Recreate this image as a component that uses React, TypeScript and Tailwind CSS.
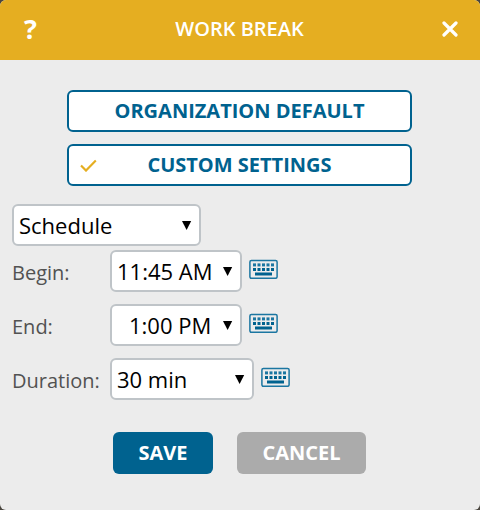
import React from "react";

function Keyboard() {
  const cols = [4, 8.5, 13, 17.5, 22];
  return (
    <svg width="29" height="20" viewBox="0 0 29 20" className="shrink-0" fill="none">
      <rect x="0.9" y="1.5" width="27.2" height="17.8" rx="1.5" stroke="#1b76a1" strokeWidth="1.5" />
      {cols.map((x) => (
        <React.Fragment key={x}>
          <rect x={x} y="4.4" width="3" height="3" fill="#1b76a1" />
          <rect x={x} y="9" width="3" height="3" fill="#00628f" />
        </React.Fragment>
      ))}
      <rect x="6" y="13.5" width="17" height="3" fill="#00628f" />
    </svg>
  );
}

function Arrow() {
  return (
    <svg width="10" height="10" viewBox="0 0 10 10" className="shrink-0">
      <path d="M0 1H9.2L4.6 10Z" fill="#000" />
    </svg>
  );
}

function Select({ label, className, textClass = "" }: { label: string; className: string; textClass?: string }) {
  return (
    <button
      className={`flex h-[42px] items-center justify-between rounded-md border-2 border-[#bfc4c8] bg-white pr-[7px] pl-[5px] text-[22px] leading-none text-black ${className}`}
    >
      <span className={textClass}>{label}</span>
      <Arrow />
    </button>
  );
}

function Row({ label, children }: { label: string; children: React.ReactNode }) {
  return (
    <div className="flex h-[42px] items-center">
      <span className="w-[98px] shrink-0 pt-[3px] text-[20px] leading-none text-[#525252]">{label}</span>
      {children}
      <span className="-mt-[4px] ml-[7px] flex">
        <Keyboard />
      </span>
    </div>
  );
}

export default function App() {
  return (
    <div className="h-[510px] w-[480px] bg-[#4a463f] font-['Open_Sans',sans-serif]">
      <div className="flex h-full flex-col overflow-hidden rounded-[6px] bg-[#ececec]">
        <header className="flex h-[60px] shrink-0 items-center justify-between bg-[#e5ae21] pr-[21px] pl-[24px] text-white">
          <span className="w-[14px] pb-[4px] text-[27px] leading-none font-bold">?</span>
          <h1 className="pb-[3px] text-[20px] leading-none font-semibold">WORK BREAK</h1>
          <svg width="18" height="18" viewBox="0 0 18 18">
            <path d="M3 2L15 14M15 2L3 14" stroke="#fff" strokeWidth="3.2" strokeLinecap="round" />
          </svg>
        </header>
        <div className="flex flex-col gap-3 pt-[30px] pl-[67px]">
          <button className="h-[42px] w-[345px] rounded-md border-2 border-[#00628f] bg-white text-[20px] leading-none font-bold text-[#00628f]">
            ORGANIZATION DEFAULT
          </button>
          <button className="flex h-[42px] w-[345px] items-center rounded-md border-2 border-[#00628f] bg-white pr-[28px] pl-[11px] text-[20px] leading-none font-bold text-[#00628f]">
            <svg width="17" height="13" viewBox="0 0 17 13" fill="none">
              <path d="M1 6.4L6 11.6L15.8 1.4" stroke="#e5ae21" strokeWidth="2.1" />
            </svg>
            <span className="flex-1">CUSTOM SETTINGS</span>
          </button>
        </div>
        <div className="flex flex-col pt-[18px] pl-3">
          <Select label="Schedule" className="w-[189px]" />
          <div className="mt-1 flex flex-col gap-3">
            <Row label="Begin:">
              <Select label="11:45 AM" className="w-[132px]" />
            </Row>
            <Row label="End:">
              <Select label="1:00 PM" className="w-[132px]" textClass="pl-[12px]" />
            </Row>
            <Row label="Duration:">
              <Select label="30 min" className="w-[144px]" />
            </Row>
          </div>
        </div>
        <footer className="flex gap-6 pt-8 pl-[113px] text-[20px] leading-none font-bold text-white">
          <button className="h-[42px] w-[100px] rounded-md bg-[#00628f]">SAVE</button>
          <button className="h-[42px] w-[129px] rounded-md bg-[#ababab]">CANCEL</button>
        </footer>
      </div>
    </div>
  );
}
